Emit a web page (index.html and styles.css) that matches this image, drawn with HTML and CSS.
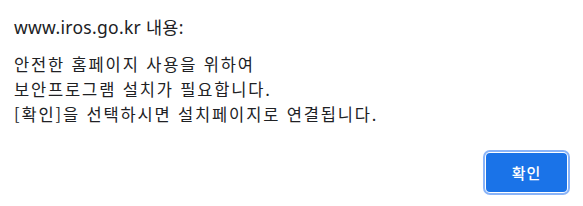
FILE: index.html
```html
<!DOCTYPE html>
<html lang="ko">
<head>
    <meta charset="UTF-8">
    <meta name="viewport" content="width=device-width, initial-scale=1.0">
    <title>알림</title>
    <link rel="stylesheet" href="styles.css">
</head>
<body>
    <div class="dialog">
        <div class="title">www.iros.go.kr 내용:</div>
        <div class="message">
            안전한 홈페이지 사용을 위하여<br>
            보안프로그램 설치가 필요합니다.<br>
            [확인]을 선택하시면 설치페이지로 연결됩니다.
        </div>
        <div class="actions">
            <button class="ok-but">확인</button>
        </div>
    </div>
</body>
</html>
```

FILE: styles.css
```css
body {
    margin: 0;
    background-color: #fff;
    font-family: "Noto Sans", "Noto Sans CJK KR", sans-serif;
    color: #202124;
}

.dialog {
    height: 206px;
    box-sizing: border-box;
    padding: 15px 16px 14px 14px;
    display: flex;
    flex-direction: column;
}

.title {
    font-size: 17.5px;
    line-height: 24px;
    letter-spacing: 0.3px;
}

.message {
    margin-top: 13px;
    font-family: "Noto Sans CJK KR", sans-serif;
    font-size: 16.5px;
    line-height: 25px;
    letter-spacing: 1.85px;
}

.actions {
    margin-top: auto;
    display: flex;
    justify-content: flex-end;
}

.ok-but {
    width: 81px;
    height: 39px;
    border: none;
    border-radius: 4px;
    background-color: #1a73e8;
    color: #fff;
    font-family: "Noto Sans CJK KR", sans-serif;
    font-size: 15px;
    font-weight: 500;
    letter-spacing: 1px;
    box-shadow: 0 0 0 1px #fff, 0 0 0 3px #8ab4f8;
    cursor: pointer;
}
```
